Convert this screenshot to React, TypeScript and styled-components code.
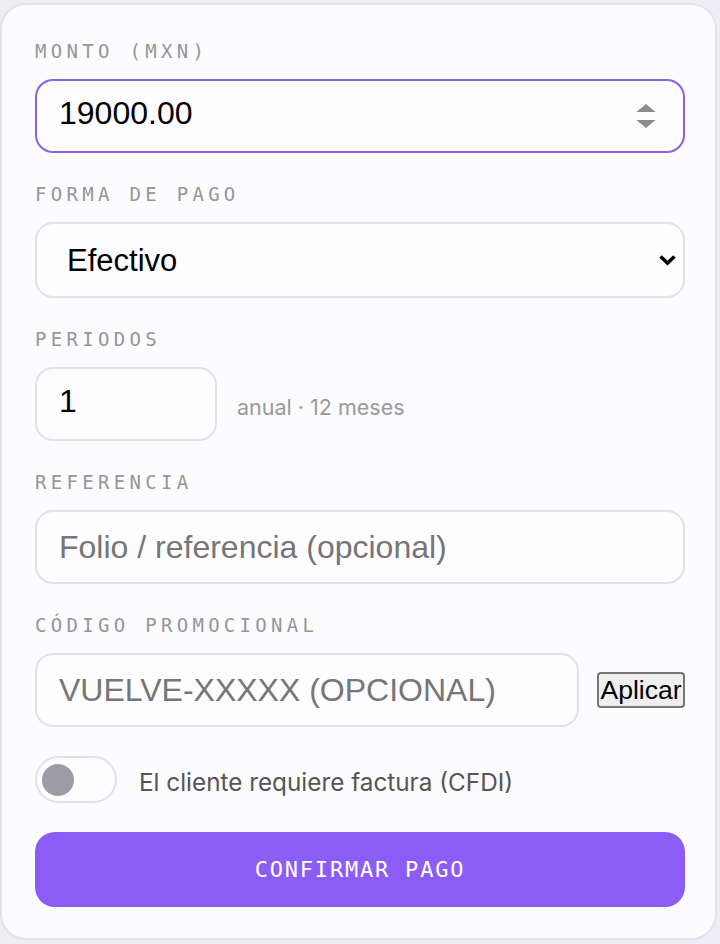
import React, { useState } from "react";
import styled, { createGlobalStyle } from "styled-components";

const GlobalStyle = createGlobalStyle`
  html, body {
    margin: 0;
    padding: 0;
    background: #efeef4;
  }
  * {
    box-sizing: border-box;
  }
`;

export default function App() {
  const [amount, setAmount] = useState("19000.00");
  const [method, setMethod] = useState("efectivo");
  const [periods, setPeriods] = useState("1");
  const [invoice, setInvoice] = useState(false);

  return (
    <Page>
      <GlobalStyle />
      <Card>
        <Field>
          <Label>Monto (MXN)</Label>
          <InputBox $focused>
            <TextInput $numeric value={amount} onChange={(e) => setAmount(e.target.value)} />
            <Spinner width="20" height="24" viewBox="0 0 20 24">
              <path d="M10 0 L19.5 8 L0.5 8 Z" fill="#8a8a8a" />
              <path d="M0.5 16 L19.5 16 L10 24 Z" fill="#8a8a8a" />
            </Spinner>
          </InputBox>
        </Field>

        <Field>
          <Label>Forma de pago</Label>
          <InputBox $tall>
            <Select value={method} onChange={(e) => setMethod(e.target.value)}>
              <option value="efectivo">Efectivo</option>
              <option value="tarjeta">Tarjeta</option>
              <option value="transferencia">Transferencia</option>
            </Select>
            <Chevron width="19" height="12" viewBox="0 0 19 12">
              <path d="M2.5 2.5 L9.5 9 L16.5 2.5" fill="none" stroke="#000" strokeWidth="3.6" />
            </Chevron>
          </InputBox>
        </Field>

        <Field>
          <Label>Periodos</Label>
          <Row>
            <InputBox $width="182px">
              <TextInput $numeric value={periods} onChange={(e) => setPeriods(e.target.value)} />
            </InputBox>
            <Hint>anual · 12 meses</Hint>
          </Row>
        </Field>

        <Field>
          <Label>Referencia</Label>
          <InputBox>
            <TextInput placeholder="Folio / referencia (opcional)" />
          </InputBox>
        </Field>

        <Field>
          <Label>Código promocional</Label>
          <Row $gap="18px">
            <InputBox $width="544px">
              <TextInput placeholder="VUELVE-XXXXX (OPCIONAL)" />
            </InputBox>
            <ApplyButton>Aplicar</ApplyButton>
          </Row>
        </Field>

        <ToggleRow>
          <Toggle type="button" $on={invoice} onClick={() => setInvoice(!invoice)}>
            <Knob $on={invoice} />
          </Toggle>
          <ToggleText>El cliente requiere factura (CFDI)</ToggleText>
        </ToggleRow>

        <ConfirmButton>Confirmar pago</ConfirmButton>
      </Card>
    </Page>
  );
}

const Page = styled.div`
  padding: 3px 3px 4px 0;
`;

const Card = styled.div`
  width: 717px;
  height: 937px;
  background: #fcfbfe;
  border: 2px solid #e3e2ea;
  border-radius: 26px;
  padding: 34px 30px 0 33px;
  display: flex;
  flex-direction: column;
  gap: 29px;
`;

const Field = styled.div`
  display: flex;
  flex-direction: column;
  gap: 16px;
`;

const Label = styled.div`
  font-family: "DejaVu Sans Mono", monospace;
  font-size: 19px;
  line-height: 24px;
  letter-spacing: 4.3px;
  text-transform: uppercase;
  color: #969696;
`;

const InputBox = styled.div<{ $focused?: boolean; $tall?: boolean; $width?: string }>`
  display: flex;
  flex: none;
  align-items: center;
  width: ${(p) => p.$width || "100%"};
  height: ${(p) => (p.$tall ? "76px" : "74px")};
  border: 2px solid ${(p) => (p.$focused ? "#8e62dc" : "#e2e1e8")};
  border-radius: 18px;
  background: #fdfcff;
  padding: 0 27px 0 22px;
`;

const TextInput = styled.input<{ $numeric?: boolean }>`
  flex: 1;
  min-width: 0;
  border: none;
  outline: none;
  background: transparent;
  padding: 0 0 ${(p) => (p.$numeric ? "5px" : "0")};
  font-family: "Liberation Sans", Arial, sans-serif;
  font-size: 32px;
  color: #000;

  &::placeholder {
    color: #767676;
  }
`;

const Spinner = styled.svg`
  flex: none;
`;

const Select = styled.select`
  flex: 1;
  appearance: none;
  border: none;
  outline: none;
  background: transparent;
  padding: 0 0 0 8px;
  font-family: "Liberation Sans", Arial, sans-serif;
  font-size: 31px;
  color: #000;
`;

const Chevron = styled.svg`
  flex: none;
  margin-right: -21px;
`;

const Row = styled.div<{ $gap?: string }>`
  display: flex;
  align-items: center;
  gap: ${(p) => p.$gap || "20px"};
`;

const Hint = styled.span`
  font-family: Inter, sans-serif;
  font-size: 21.5px;
  color: #9a9a9a;
  padding-top: 5px;
`;

const ApplyButton = styled.button`
  flex: none;
  width: 88px;
  height: 36px;
  padding: 0;
  background: #efefef;
  border: 2px solid #767676;
  border-radius: 4px;
  font-family: "Liberation Sans", Arial, sans-serif;
  font-size: 26.5px;
  color: #000;
`;

const ToggleRow = styled.div`
  display: flex;
  align-items: center;
  gap: 22px;
`;

const Toggle = styled.button<{ $on: boolean }>`
  width: 82px;
  height: 47px;
  border-radius: 24px;
  border: 2px solid #e2e1e8;
  background: ${(p) => (p.$on ? "#8b5cf6" : "#fdfcff")};
  padding: 0 5px;
  display: flex;
  align-items: center;
  justify-content: ${(p) => (p.$on ? "flex-end" : "flex-start")};
  cursor: pointer;
`;

const Knob = styled.span<{ $on: boolean }>`
  width: 32px;
  height: 32px;
  border-radius: 50%;
  background: ${(p) => (p.$on ? "#fff" : "#9d9ca6")};
`;

const ToggleText = styled.span`
  font-family: Inter, sans-serif;
  font-size: 24.3px;
  color: #555;
  padding-top: 4px;
`;

const ConfirmButton = styled.button`
  width: 100%;
  height: 75px;
  border: none;
  border-radius: 20px;
  background: #8b5cf6;
  color: #fff;
  font-family: "DejaVu Sans Mono", monospace;
  font-size: 22px;
  letter-spacing: 1.8px;
  text-transform: uppercase;
  cursor: pointer;
`;
